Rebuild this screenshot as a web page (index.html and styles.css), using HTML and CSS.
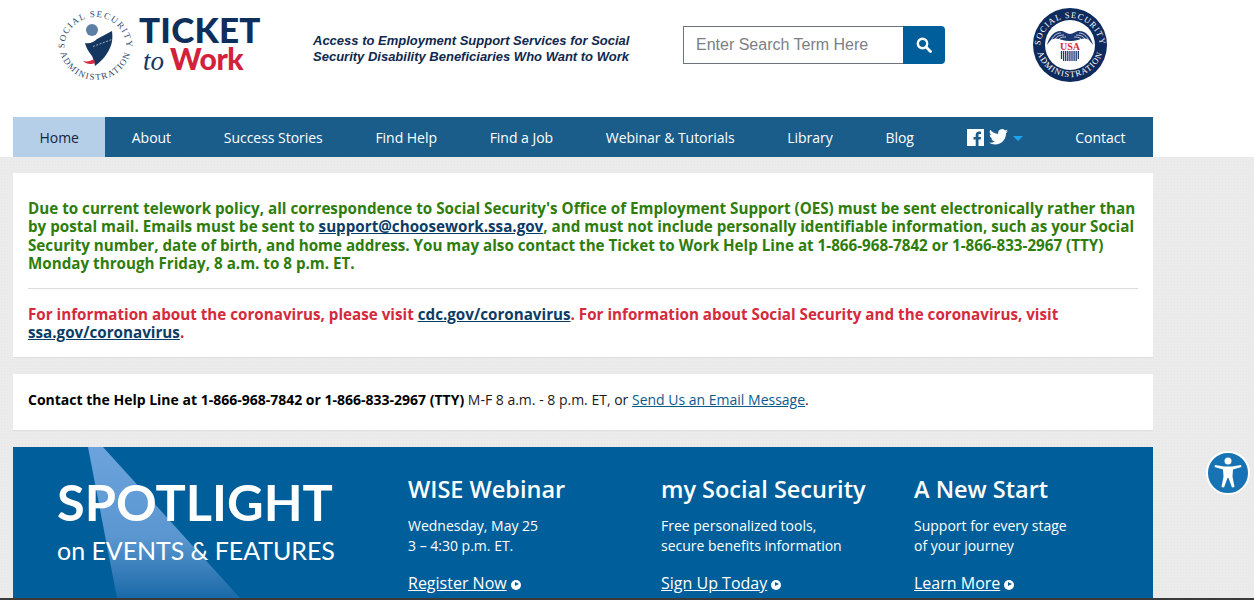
FILE: index.html
```html
<!DOCTYPE html>
<html lang="en">
<head>
<meta charset="utf-8">
<title>Ticket to Work</title>
<link rel="stylesheet" href="styles.css">
</head>
<body>
<header class="masthead">
  <a class="logo" href="#">
    <svg class="logo-seal" viewBox="0 0 76 76" width="76" height="76" aria-hidden="true">
      <defs>
        <path id="sealTop" d="M7.500 42 A31 31 0 0 1 69.500 42"/>
        <path id="sealBottom" d="M2.500 38 A36 36 0 0 0 74.500 38"/>
      </defs>
      <text class="seal-text"><textPath href="#sealTop" startOffset="50%" text-anchor="middle">SOCIAL SECURITY</textPath></text>
      <text class="seal-text"><textPath href="#sealBottom" startOffset="50%" text-anchor="middle">ADMINISTRATION</textPath></text>
      <circle cx="35" cy="24" r="6" fill="#5d7fa6"/>
      <path d="M28 37 C33 38 37 36 40 33 C45 30 50 28 55 25 C56 33 55 38 52 44 C48 52 43 56 38 60 C37 55 36 52 35 50 C32 46 29 42 28 37Z" fill="#14365f"/>
      <path d="M36 40.500 L55 33.500" stroke="#dfe7f0" stroke-width=".7" stroke-dasharray="2 1.500"/>
      <path d="M26 55 C30 56 34 55 37 53 L38 57 C34 59 29 58 26 55Z" fill="#d8283f"/>
    </svg>
    <span class="logo-words">
      <span class="logo-ticket">TICKET</span>
      <span class="logo-line"><span class="logo-to">to</span><span class="logo-work">Work</span></span>
    </span>
  </a>
  <p class="tagline">Access to Employment Support Services for Social Security Disability Beneficiaries Who Want to Work</p>
  <form class="search">
    <input class="search-input" type="text" placeholder="Enter Search Term Here">
    <button class="search-btn" type="button" aria-label="Search">
      <svg viewBox="0 0 16 16" width="16" height="16" aria-hidden="true"><circle cx="6.500" cy="6.500" r="4.700" fill="none" stroke="#fff" stroke-width="2.400"/><path d="M10 10l4.500 4.500" stroke="#fff" stroke-width="2.800" stroke-linecap="round"/></svg>
    </button>
  </form>
  <svg class="ssa-seal" viewBox="0 0 76 76" width="76" height="76" aria-hidden="true">
    <defs>
      <path id="ssaTop" d="M8 41 A30 30 0 0 1 68 41"/>
      <path id="ssaBottom" d="M4 36 A34 34 0 0 0 72 36"/>
    </defs>
    <circle cx="38" cy="38" r="37" fill="#0f2a5c"/>
    <circle cx="38" cy="38" r="25" fill="#fff"/>
    <text class="ssa-text"><textPath href="#ssaTop" startOffset="50%" text-anchor="middle">SOCIAL SECURITY</textPath></text>
    <text class="ssa-text"><textPath href="#ssaBottom" startOffset="50%" text-anchor="middle">ADMINISTRATION</textPath></text>
    <path class="wing-fill" d="M15 38 C17 29 23 23 30 24 C33 24.500 35 27 38 27 C41 27 43 24.500 46 24 C53 23 59 29 61 38 C58 33 55 31 52 31.500 C48 32 44 34 38 34 C32 34 28 32 24 31.500 C21 31 18 33 15 38Z"/>
    <path class="wing-lines" d="M19 34 C21 29 25 26 29 26 M23 32 C25 29 28 28 32 28 M27 32 C29 30 31 30 34 30 M57 34 C55 29 51 26 47 26 M53 32 C51 29 48 28 44 28 M49 32 C47 30 45 30 42 30"/>
    <text class="ssa-usa" x="38" y="43" text-anchor="middle">USA</text>
    <path class="bars" d="M29.500 44v8M31.600 44v10M33.700 44v10M35.800 44v10M37.900 44v10M40 44v10M42.100 44v10M44.200 44v10M46.300 44v8"/>
  </svg>
</header>

<nav class="nav">
  <a class="nav-item is-active" href="#">Home</a>
  <a class="nav-item" href="#">About</a>
  <a class="nav-item" href="#">Success Stories</a>
  <a class="nav-item" href="#">Find Help</a>
  <a class="nav-item" href="#">Find a Job</a>
  <a class="nav-item" href="#">Webinar &amp; Tutorials</a>
  <a class="nav-item" href="#">Library</a>
  <a class="nav-item" href="#">Blog</a>
  <a class="nav-item nav-social" href="#" aria-label="Social media">
    <svg viewBox="0 0 17 17" width="17" height="17" aria-hidden="true"><path fill="#fff" fill-rule="evenodd" d="M0 0h17v17h-5.500v-6.500h2.200l.3-2.600h-2.500V6.300c0-.8.200-1.300 1.300-1.300H14V2.700c-.3 0-1-.1-2-.1-2 0-3.300 1.200-3.300 3.400v1.900H6.500v2.600h2.200V17H0z"/></svg>
    <svg viewBox="0 0 24 20" width="19" height="16" aria-hidden="true"><path fill="#fff" d="M24 2.400a9.800 9.800 0 0 1-2.800.8A4.900 4.900 0 0 0 23.300.5a9.800 9.800 0 0 1-3.100 1.200 4.900 4.900 0 0 0-8.400 4.500A14 14 0 0 1 1.700.9a4.900 4.900 0 0 0 1.500 6.600 4.900 4.900 0 0 1-2.200-.6v.1a4.900 4.900 0 0 0 3.900 4.800 4.900 4.900 0 0 1-2.200.1 4.900 4.900 0 0 0 4.600 3.400A9.900 9.900 0 0 1 0 17.300 14 14 0 0 0 7.500 19.500c9.100 0 14-7.500 14-14v-.6A10 10 0 0 0 24 2.400z"/></svg>
    <span class="nav-caret"></span>
  </a>
  <a class="nav-item" href="#">Contact</a>
</nav>

<main class="main">
  <section class="card card-alert">
    <p class="alert-green">Due to current telework policy, all correspondence to Social Security's Office of Employment Support (OES) must be sent electronically rather than by postal mail. Emails must be sent to <a href="#">support@choosework.ssa.gov</a>, and must not include personally identifiable information, such as your Social Security number, date of birth, and home address. You may also contact the Ticket to Work Help Line at 1-866-968-7842 or 1-866-833-2967 (TTY) Monday through Friday, 8 a.m. to 8 p.m. ET.</p>
    <hr class="rule">
    <p class="alert-red">For information about the coronavirus, please visit <a href="#">cdc.gov/coronavirus</a>. For information about Social Security and the coronavirus, visit <a href="#">ssa.gov/coronavirus</a>.</p>
  </section>

  <section class="card card-help">
    <p class="help"><strong>Contact the Help Line at 1-866-968-7842 or 1-866-833-2967 (TTY)</strong> M-F 8 a.m. - 8 p.m. ET, or <a href="#">Send Us an Email Message</a>.</p>
  </section>

  <section class="spotlight">
    <div class="spot-brand">
      <svg class="spot-beam" viewBox="0 0 160 151" width="160" height="151" aria-hidden="true">
        <defs><linearGradient id="beam" x1="0" y1="0" x2="0" y2="1"><stop offset="0" stop-color="#6ca3dc"/><stop offset=".6" stop-color="#5a96d0"/><stop offset="1" stop-color="#1a6aa8"/></linearGradient></defs>
        <path d="M1 0H16L153 151H30Z" fill="url(#beam)"/>
      </svg>
      <div class="spot-title">SPOTLIGHT</div>
      <div class="spot-sub">on EVENTS &amp; FEATURES</div>
    </div>
    <div class="spot-col">
      <h2>WISE Webinar</h2>
      <p>Wednesday, May 25<br>3 – 4:30 p.m. ET.</p>
      <a class="spot-link" href="#"><span>Register Now</span><i class="go"></i></a>
    </div>
    <div class="spot-col">
      <h2>my Social Security</h2>
      <p>Free personalized tools,<br>secure benefits information</p>
      <a class="spot-link" href="#"><span>Sign Up Today</span><i class="go"></i></a>
    </div>
    <div class="spot-col">
      <h2>A New Start</h2>
      <p>Support for every stage<br>of your journey</p>
      <a class="spot-link" href="#"><span>Learn More</span><i class="go"></i></a>
    </div>
  </section>
</main>

<button class="a11y" type="button" aria-label="Accessibility">
  <svg viewBox="0 0 44 44" width="44" height="44" aria-hidden="true">
    <circle cx="22" cy="22" r="21" fill="#1873b4" stroke="#fff" stroke-width="2"/>
    <circle cx="22" cy="10" r="3.500" fill="#fff"/>
    <path fill="#fff" d="M9 14L18 15.500h8L35 14l.4 2L27 18.500l-.5 7L28.500 36l-2.500.6L22.500 27h-1L18 36.600l-2.500-.6L17.500 25.500l-.5-7L8.600 16z"/>
  </svg>
</button>
<div class="bottom-edge"></div>
</body>
</html>
```

FILE: styles.css
```css
* { box-sizing: border-box; }
html, body { margin: 0; height: 600px; overflow: hidden; }
body { font-family: "Open Sans", sans-serif; color: #000; background: #fff; font-size: 14px; }
p { margin: 0; }

.masthead { height: 117px; width: 1153px; display: flex; align-items: flex-start; }
.logo { display: flex; text-decoration: none; margin: 6px 0 0 57px; width: 256px; gap: 6px; }
.logo-seal { flex: none; overflow: visible; }
.seal-text { font: 9px "Liberation Serif", serif; letter-spacing: 1.300px; fill: #2f4a70; }
.logo-words { display: flex; flex-direction: column; font-family: "Lato", sans-serif; font-weight: 900; margin-top: 6px; }
.logo-ticket { font-size: 35px; line-height: 34px; color: #0e2e5c; letter-spacing: .2px; }
.logo-line { display: flex; align-items: baseline; gap: 6px; line-height: 28px; margin: -2px 0 0 4px; }
.logo-to { font: italic 400 27px "Liberation Serif", serif; color: #14375f; }
.logo-work { font-size: 30px; letter-spacing: -.4px; color: #d3213c; }

.tagline { width: 330px; margin: 33px 0 0; font: italic 700 13px/16px "Liberation Sans", sans-serif; color: #10294d; }
.search { display: flex; margin: 26px 0 0 40px; height: 38px; width: 262px; }
.search-input { flex: 1; min-width: 0; height: 38px; border: 1px solid #6c757d; border-right: 0; padding: 0 12px; font: 16px "Liberation Sans", sans-serif; outline: 0; border-radius: 0; }
.search-input::placeholder { color: #7b8087; opacity: 1; }
.search-btn { width: 42px; flex: none; border: 0; padding: 0; background: #005f9b; border-radius: 0 4px 4px 0; display: flex; align-items: center; justify-content: center; }
.ssa-seal { margin: 7px 0 0 87px; flex: none; overflow: visible; }
.ssa-text { font: 8.500px "Liberation Serif", serif; letter-spacing: 1px; fill: #fff; }
.ssa-usa { font: 700 10px "Liberation Serif", serif; fill: #d9263f; }
.wing-fill { fill: #1b3670; }
.wing-lines { fill: none; stroke: #fff; stroke-width: .7; }
.bars { fill: none; stroke: #1b3670; stroke-width: 1.300; }

.nav { margin-left: 13px; width: 1140px; height: 40px; background: #1a5c8a; display: flex; }
.nav-item { display: flex; align-items: center; padding: 0 26.350px; color: #fff; font-size: 14px; letter-spacing: -.03px; text-decoration: none; white-space: nowrap; flex: none; }
.nav-item.is-active { background: #b5cfe8; color: #12263f; padding: 0 26.500px; }
.nav-social { gap: 5px; }
.nav-caret { margin: 3px 0 0 0; border: 5px solid transparent; border-top: 5px solid #1ca4ee; border-bottom: 0; }

.main { height: 443px; padding: 16px 101px 0 13px; background-color: #ebebeb; background-image: radial-gradient(#e6e6e6 .7px, transparent .8px); background-size: 3px 3px; display: flex; flex-direction: column; gap: 16px; overflow: hidden; }
.card { background: #fff; border-bottom: 1px solid #dedede; flex: none; }
.card-alert { height: 185px; padding: 26px 15px 0; font-weight: 700; font-size: 15.200px; line-height: 18.400px; }
.alert-green { color: #2e7d0c; }
.alert-red { color: #d42a3c; }
.card-alert a { color: #0b3c66; }
.rule { border: 0; border-top: 1px solid #dcdcdc; margin: 15px 0 16px; }
.card-help { height: 57px; padding: 0 15px 6px; display: flex; align-items: center; }
.help { font-size: 14px; color: #1a1a1a; }
.help strong { font-weight: 700; color: #000; }
.help a { color: #0b5a8e; }

.spotlight { flex: none; height: 170px; background: #005f9b; display: flex; color: #fff; position: relative; overflow: hidden; }
.spot-brand { width: 395px; flex: none; padding: 26px 0 0 44px; position: relative; }
.spot-beam { position: absolute; left: 74px; top: 0; }
.spot-title, .spot-sub { position: relative; font-family: "Lato", sans-serif; white-space: nowrap; }
.spot-title { font-size: 50.500px; line-height: 58px; font-weight: 700; }
.spot-sub { font-size: 25px; line-height: 30px; margin-top: 4px; letter-spacing: -.05px; }
.spot-col { width: 253px; flex: none; padding-top: 26px; }
.spot-col h2 { margin: 0; font-size: 23.500px; line-height: 32px; font-weight: 600; white-space: nowrap; }
.spot-col p { margin-top: 11px; font-size: 14px; line-height: 20px; }
.spot-link { display: inline-flex; align-items: center; gap: 4px; margin-top: 16px; color: #fff; font-size: 16px; line-height: 22px; text-decoration: none; }
.spot-link span { text-decoration: underline; }
.go { width: 10px; height: 10px; margin-top: 3px; border-radius: 50%; background: #fff; position: relative; display: block; }
.go::after { content: ""; position: absolute; left: 4px; top: 2.500px; border-left: 4px solid #005f9b; border-top: 2.500px solid transparent; border-bottom: 2.500px solid transparent; }

.a11y { position: absolute; left: 1206px; top: 451px; width: 44px; height: 44px; padding: 0; border: 0; background: none; }
.bottom-edge { position: absolute; left: 0; top: 598px; width: 100%; height: 2px; background: #3a3a3a; }
```
